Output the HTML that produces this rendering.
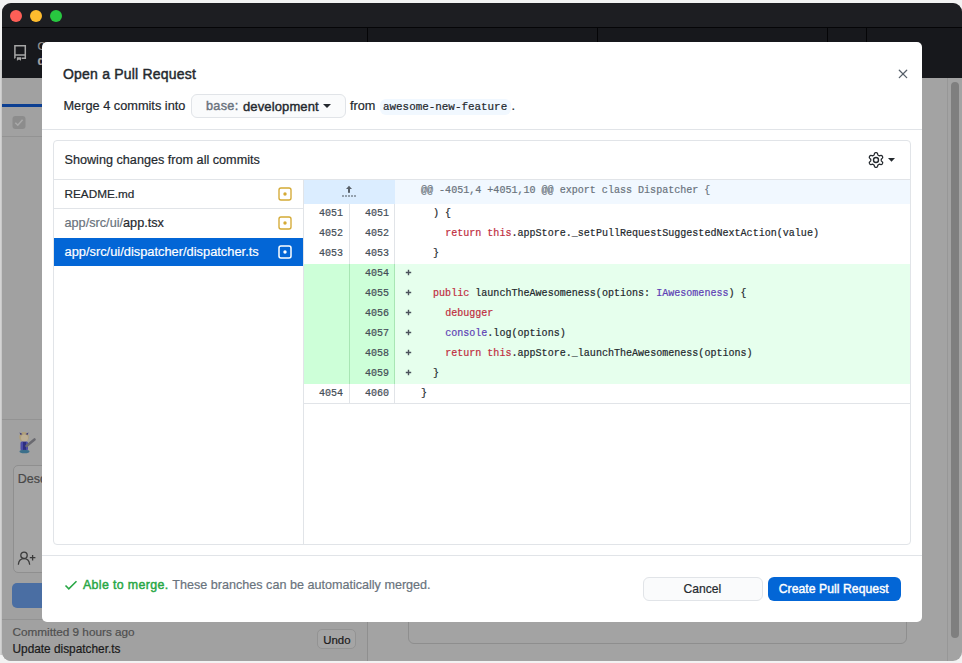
<!DOCTYPE html>
<html><head><meta charset="utf-8">
<style>
*{box-sizing:border-box;margin:0;padding:0}
html,body{width:962px;height:663px;overflow:hidden;background:#f2f2f2;font-family:"Liberation Sans",sans-serif;}
.a{position:absolute}
.t{position:absolute;white-space:nowrap;line-height:1;-webkit-text-stroke:0.2px currentColor}
.mono{font-family:"Liberation Mono",monospace;-webkit-text-stroke:0.2px}
.ln{font-size:10px;color:#444d56}
.cd{font-size:10.05px;color:#24292e}
.k{color:#c02d3e}
.p{color:#5e3fb5}
</style></head><body>
<!-- window -->
<div class="a" style="left:0;top:60px;width:2px;height:595px;background:linear-gradient(to right,#dadada,#c2c2c2)"></div>
<div class="a" style="left:2px;top:3px;width:960px;height:658px;border-radius:9px;overflow:hidden;background:#a3a3a3">
  <div class="a" style="left:0;top:0;width:960px;height:24px;background:#1d1e22"></div>
  <div class="a" style="left:0;top:24px;width:960px;height:1px;background:#050507"></div>
  <div class="a" style="left:0;top:25px;width:960px;height:50px;background:#17181c"></div>
  <div class="a" style="left:365px;top:25px;width:1px;height:50px;background:#050507"></div>
  <div class="a" style="left:595px;top:25px;width:1px;height:50px;background:#050507"></div>
  <div class="a" style="left:825px;top:25px;width:1px;height:50px;background:#050507"></div>
  <div class="a" style="left:864px;top:25px;width:1px;height:50px;background:#050507"></div>
  <!-- traffic -->
  <div class="a" style="left:8px;top:7px;width:12px;height:12px;border-radius:50%;background:#fe5f57"></div>
  <div class="a" style="left:28px;top:7px;width:12px;height:12px;border-radius:50%;background:#febc2e"></div>
  <div class="a" style="left:48px;top:7px;width:12px;height:12px;border-radius:50%;background:#28c840"></div>
  <!-- sidebar -->
  <div class="a" style="left:0;top:75px;width:365px;height:583px;background:#a1a1a1"></div>
  <div class="a" style="left:365px;top:75px;width:1px;height:583px;background:#8f8f8f"></div>
  <div class="a" style="left:0;top:101px;width:365px;height:3px;background:#0c3f92"></div>
  <div class="a" style="left:0;top:133px;width:365px;height:1px;background:#939393"></div>
  <div class="a" style="left:0;top:416px;width:365px;height:1px;background:#939393"></div>
  <div class="a" style="left:0;top:616px;width:365px;height:1px;background:#939393"></div>
  <div class="t" style="left:10.5px;top:622.5px;font-size:11.75px;color:#4f4f4f">Committed 9 hours ago</div>
  <div class="t" style="left:10.5px;top:641px;font-size:11.85px;color:#1a1a1a">Update dispatcher.ts</div>
  <div class="a" style="left:315px;top:626px;width:39px;height:20px;border:1px solid #939393;border-radius:5px;background:#a5a5a5"></div>
  <div class="t" style="left:321.3px;top:631.5px;font-size:11.4px;color:#1a1a1a">Undo</div>
  <!-- right panel -->
  <div class="a" style="left:406px;top:560px;width:499px;height:81px;border:1px solid #8e8e8e;border-radius:6px"></div>
  <div class="a" style="left:945px;top:75px;width:1px;height:583px;background:#979797"></div>
  <div class="a" style="left:949px;top:79px;width:8px;height:556px;border-radius:4px;background:#7f7f7f"></div>
</div>

<!-- bg extras (page coords) -->
<svg class="a" style="left:12px;top:42px" width="18" height="22" viewBox="0 0 18 22"><path d="M2.9 16V3.7H13.3V16.2H9.6M2.9 12.9H13.3" fill="none" stroke="#a6a6a6" stroke-width="1.5"/><path d="M2.5 15.7L2.9 16.6" stroke="#a6a6a6" stroke-width="1.2"/><path d="M4.9 15.3H9V18.8L7 17.6L4.9 18.8Z" fill="#a6a6a6"/></svg>
<div class="t" style="left:37.5px;top:40.5px;font-size:11px;color:#9a9a9a">Current</div>
<div class="t" style="left:37.5px;top:54.5px;font-size:12px;font-weight:bold;color:#a6a6a6">desktop</div>
<svg class="a" style="left:12px;top:116px" width="14" height="13" viewBox="0 0 14 13"><rect x="0.5" y="0" width="13" height="13" rx="3" fill="#8c8c8c"/><path d="M3.3 6.7L5.8 9.2L10.6 3.8" fill="none" stroke="#a9a9a9" stroke-width="1.6"/></svg>

<div class="a" style="left:13px;top:466px;width:40px;height:106px;background:#a5a5a5;border-radius:4px 0 0 4px"></div>
<div class="a" style="left:12.5px;top:465px;width:60px;height:107.5px;border:1px solid #8f8f8f;border-radius:5px"></div>
<div class="t" style="left:17.8px;top:472.5px;font-size:12.5px;color:#484848">Description</div>
<svg class="a" style="left:16px;top:549px" width="20" height="17" viewBox="0 0 20 17"><circle cx="8" cy="6.3" r="3.2" fill="none" stroke="#3a3a3a" stroke-width="1.3"/><path d="M2.4 15.2C2.8 11.6 5.2 9.6 8 9.6S13.2 11.6 13.6 15.2" fill="none" stroke="#3a3a3a" stroke-width="1.3" stroke-linecap="round"/><path d="M13.8 8.7H19.4M16.6 5.9V11.5" stroke="#3a3a3a" stroke-width="1.3"/></svg>
<svg class="a" style="left:17px;top:430px" width="20" height="25" viewBox="0 0 20 25">
<ellipse cx="7" cy="7" rx="4.8" ry="5" fill="#b0a07a"/>
<ellipse cx="7.5" cy="8" rx="3.5" ry="3.6" fill="#bcae94"/>
<path d="M2.5 2.5L3.5 5L5.5 4Z" fill="#3e3a78"/><path d="M11.5 2.5L10.5 5L8.5 4Z" fill="#3e3a78"/>
<rect x="3.5" y="11.5" width="7.5" height="9" rx="1.5" fill="#4c4ca8"/>
<rect x="6" y="12" width="3" height="8" fill="#2e2e80"/>
<path d="M9.5 16L17.5 9.5" stroke="#6a6a70" stroke-width="2.6" stroke-linecap="round"/>
<ellipse cx="7.5" cy="21.5" rx="5" ry="1.8" fill="#3b6f8a"/>
</svg>
<div class="a" style="left:12px;top:583px;width:60px;height:25px;border-radius:5px;background:#4a6ea3"></div>
<!-- modal -->
<div class="a" style="left:42px;top:42px;width:880px;height:580px;border-radius:5px;background:#fff"></div>
<div class="t" style="left:63px;top:67px;font-size:14px;letter-spacing:0.2px;-webkit-text-stroke:0.45px #24292e;color:#24292e">Open a Pull Request</div>
<svg class="a" style="left:897px;top:68px" width="12" height="12" viewBox="0 0 12 12"><path d="M2.3 2.2L9.7 9.6M9.7 2.2L2.3 9.6" stroke="#57606a" stroke-width="1.3" fill="none" stroke-linecap="round"/></svg>
<div class="t" style="left:63.5px;top:100.2px;font-size:12.75px;color:#24292e">Merge 4 commits into</div>
<div class="a" style="left:190.5px;top:94px;width:155px;height:24px;border:1px solid #e1e4e8;border-radius:6px;background:#fafbfc"></div>
<div class="t" style="left:206px;top:100px;font-size:12.7px;letter-spacing:0.3px;-webkit-text-stroke:0.4px #6a737d;color:#6a737d">base:</div>
<div class="t" style="left:243px;top:100px;font-size:13px;letter-spacing:0.12px;-webkit-text-stroke:0.4px #24292e;color:#24292e">development</div>
<svg class="a" style="left:323px;top:104px" width="8" height="4" viewBox="0 0 8 4"><path d="M0 0H8L4 4Z" fill="#24292e"/></svg>
<div class="t" style="left:350px;top:100.2px;font-size:12.7px;color:#24292e">from</div>
<div class="a" style="left:379.5px;top:98.5px;width:131px;height:16.5px;border-radius:6px;background:#f1f8ff"></div>
<div class="t mono" style="left:383px;top:102px;font-size:10.9px;color:#24292e">awesome-new-feature</div>
<div class="t" style="left:511.5px;top:100.2px;font-size:12.7px;color:#24292e">.</div>
<div class="a" style="left:42px;top:129px;width:880px;height:1px;background:#e1e4e8"></div>

<!-- box -->
<div class="a" style="left:53px;top:140px;width:858px;height:405px;border:1px solid #e1e4e8;border-radius:4px"></div>
<div class="t" style="left:64.5px;top:154px;font-size:12.65px;color:#24292e">Showing changes from all commits</div>
<svg class="a" style="left:868px;top:152px" width="16" height="16" viewBox="0 0 16 16"><circle cx="8" cy="8" r="2.5" fill="none" stroke="#24292e" stroke-width="1.4"/><path d="M13.25 8.00 L13.25 8.14 L13.26 8.28 L13.27 8.41 L13.29 8.56 L13.33 8.70 L13.39 8.85 L13.50 9.02 L13.65 9.20 L13.85 9.41 L14.09 9.63 L14.31 9.87 L14.49 10.11 L14.61 10.34 L14.66 10.56 L14.67 10.76 L14.65 10.96 L14.60 11.15 L14.54 11.33 L14.46 11.51 L14.37 11.67 L14.26 11.84 L14.15 12.00 L14.03 12.14 L13.89 12.28 L13.73 12.40 L13.55 12.49 L13.33 12.55 L13.07 12.56 L12.77 12.53 L12.45 12.45 L12.14 12.37 L11.87 12.29 L11.63 12.25 L11.44 12.24 L11.27 12.26 L11.13 12.30 L10.99 12.36 L10.87 12.42 L10.74 12.48 L10.62 12.55 L10.51 12.62 L10.39 12.69 L10.28 12.77 L10.16 12.86 L10.06 12.97 L9.96 13.10 L9.87 13.27 L9.79 13.50 L9.71 13.77 L9.63 14.09 L9.54 14.40 L9.42 14.67 L9.28 14.89 L9.12 15.05 L8.94 15.16 L8.76 15.24 L8.57 15.29 L8.38 15.33 L8.19 15.34 L8.00 15.35 L7.81 15.34 L7.62 15.33 L7.43 15.29 L7.24 15.24 L7.06 15.16 L6.88 15.05 L6.72 14.89 L6.58 14.67 L6.46 14.40 L6.37 14.09 L6.29 13.77 L6.21 13.50 L6.13 13.27 L6.04 13.10 L5.94 12.97 L5.84 12.86 L5.72 12.77 L5.61 12.69 L5.49 12.62 L5.38 12.55 L5.26 12.48 L5.13 12.42 L5.01 12.36 L4.87 12.30 L4.73 12.26 L4.56 12.24 L4.37 12.25 L4.13 12.29 L3.86 12.37 L3.55 12.45 L3.23 12.53 L2.93 12.56 L2.67 12.55 L2.45 12.49 L2.27 12.40 L2.11 12.28 L1.97 12.14 L1.85 12.00 L1.74 11.84 L1.63 11.67 L1.54 11.51 L1.46 11.33 L1.40 11.15 L1.35 10.96 L1.33 10.76 L1.34 10.56 L1.39 10.34 L1.51 10.11 L1.69 9.87 L1.91 9.63 L2.15 9.41 L2.35 9.20 L2.50 9.02 L2.61 8.85 L2.67 8.70 L2.71 8.56 L2.73 8.41 L2.74 8.28 L2.75 8.14 L2.75 8.00 L2.75 7.86 L2.74 7.72 L2.73 7.59 L2.71 7.44 L2.67 7.30 L2.61 7.15 L2.50 6.98 L2.35 6.80 L2.15 6.59 L1.91 6.37 L1.69 6.13 L1.51 5.89 L1.39 5.66 L1.34 5.44 L1.33 5.24 L1.35 5.04 L1.40 4.85 L1.46 4.67 L1.54 4.49 L1.63 4.33 L1.74 4.16 L1.85 4.00 L1.97 3.86 L2.11 3.72 L2.27 3.60 L2.45 3.51 L2.67 3.45 L2.93 3.44 L3.23 3.47 L3.55 3.55 L3.86 3.63 L4.13 3.71 L4.37 3.75 L4.56 3.76 L4.73 3.74 L4.87 3.70 L5.01 3.64 L5.13 3.58 L5.26 3.52 L5.37 3.45 L5.49 3.38 L5.61 3.31 L5.72 3.23 L5.84 3.14 L5.94 3.03 L6.04 2.90 L6.13 2.73 L6.21 2.50 L6.29 2.23 L6.37 1.91 L6.46 1.60 L6.58 1.33 L6.72 1.11 L6.88 0.95 L7.06 0.84 L7.24 0.76 L7.43 0.71 L7.62 0.67 L7.81 0.66 L8.00 0.65 L8.19 0.66 L8.38 0.67 L8.57 0.71 L8.76 0.76 L8.94 0.84 L9.12 0.95 L9.28 1.11 L9.42 1.33 L9.54 1.60 L9.63 1.91 L9.71 2.23 L9.79 2.50 L9.87 2.73 L9.96 2.90 L10.06 3.03 L10.16 3.14 L10.28 3.23 L10.39 3.31 L10.51 3.38 L10.62 3.45 L10.74 3.52 L10.87 3.58 L10.99 3.64 L11.13 3.70 L11.27 3.74 L11.44 3.76 L11.63 3.75 L11.87 3.71 L12.14 3.63 L12.45 3.55 L12.77 3.47 L13.07 3.44 L13.33 3.45 L13.55 3.51 L13.73 3.60 L13.89 3.72 L14.03 3.86 L14.15 4.00 L14.26 4.16 L14.37 4.33 L14.46 4.49 L14.54 4.67 L14.60 4.85 L14.65 5.04 L14.67 5.24 L14.66 5.44 L14.61 5.66 L14.49 5.89 L14.31 6.13 L14.09 6.37 L13.85 6.59 L13.65 6.80 L13.50 6.98 L13.39 7.15 L13.33 7.30 L13.29 7.44 L13.27 7.59 L13.26 7.72 L13.25 7.86Z" fill="none" stroke="#24292e" stroke-width="1.3"/></svg>
<svg class="a" style="left:888px;top:158px" width="7" height="4" viewBox="0 0 7 4"><path d="M0 0H7L3.5 3.8Z" fill="#24292e"/></svg>
<div class="a" style="left:54px;top:179px;width:856px;height:1px;background:#e1e4e8"></div>
<!-- file list -->
<div class="a" style="left:303px;top:180px;width:1px;height:364px;background:#e1e4e8"></div>
<div class="t" style="left:64.5px;top:188.3px;font-size:11.75px;color:#24292e">README.md</div>
<div class="a" style="left:54px;top:208px;width:249px;height:1px;background:#e1e4e8"></div>
<div class="t" style="left:64.5px;top:217px;font-size:12.7px;color:#6a737d">app/src/ui/<span style="color:#24292e">app.tsx</span></div>
<div class="a" style="left:54px;top:237.5px;width:249px;height:28px;background:#0366d6"></div>
<div class="t" style="left:64.5px;top:246px;font-size:12.85px;color:#fff">app/src/ui/dispatcher/dispatcher.ts</div>
<svg class="a" style="left:278px;top:187px" width="14" height="14" viewBox="0 0 14 14"><rect x="1" y="1" width="12" height="12" rx="2" fill="none" stroke="#d4aa35" stroke-width="1.35"/><circle cx="7" cy="7" r="1.7" fill="#d4aa35"/></svg>
<svg class="a" style="left:278px;top:215.8px" width="14" height="14" viewBox="0 0 14 14"><rect x="1" y="1" width="12" height="12" rx="2" fill="none" stroke="#d4aa35" stroke-width="1.35"/><circle cx="7" cy="7" r="1.7" fill="#d4aa35"/></svg>
<svg class="a" style="left:278px;top:245px" width="14" height="14" viewBox="0 0 14 14"><rect x="1" y="1" width="12" height="12" rx="2" fill="none" stroke="#fff" stroke-width="1.5"/><circle cx="7" cy="7" r="1.7" fill="#fff"/></svg>

<!-- footer -->
<div class="a" style="left:42px;top:555px;width:880px;height:1px;background:#e1e4e8"></div>
<svg class="a" style="left:64px;top:578.5px" width="14" height="12" viewBox="0 0 14 12"><path d="M1.5 6.5L4.8 9.8L12.5 2.2" fill="none" stroke="#28a745" stroke-width="1.6"/></svg>
<div class="t" style="left:83px;top:579.3px;font-size:12.4px;letter-spacing:0.35px;-webkit-text-stroke:0.45px #28a745;color:#28a745">Able to merge.</div>
<div class="t" style="left:172.3px;top:579.3px;font-size:12.6px;color:#6a737d">These branches can be automatically merged.</div>
<div class="a" style="left:643px;top:576.5px;width:119.5px;height:24px;border:1px solid #e1e4e8;border-radius:6px;background:#fafbfc"></div>
<div class="t" style="left:683.5px;top:582.5px;font-size:12.1px;color:#24292e">Cancel</div>
<div class="a" style="left:768px;top:576.5px;width:133px;height:24px;border-radius:6px;background:#0366d6"></div>
<div class="t" style="left:778.7px;top:583px;font-size:12.2px;letter-spacing:0.05px;-webkit-text-stroke:0.4px #fff;color:#fff">Create Pull Request</div>
<!-- diff -->
<div class="a" style="left:304px;top:180px;width:91px;height:24px;background:#dbedff"></div>
<div class="a" style="left:395px;top:180px;width:515px;height:24px;background:#f1f8ff"></div>
<svg class="a" style="left:341px;top:185px" width="16" height="13" viewBox="0 0 16 13"><path d="M5 4L8 0.8L11 4Z" fill="#586069"/><rect x="7" y="3.5" width="2" height="4.3" fill="#586069"/><g fill="#6e7781"><rect x="1.2" y="10.2" width="1.6" height="1.6"/><rect x="4.2" y="10.2" width="1.6" height="1.6"/><rect x="7.2" y="10.2" width="1.6" height="1.6"/><rect x="10.2" y="10.2" width="1.6" height="1.6"/><rect x="13.2" y="10.2" width="1.6" height="1.6"/></g></svg>
<div class="t mono" style="left:421px;top:186px;font-size:10.05px;color:#6a737d">@@ -4051,4 +4051,10 @@ export class Dispatcher {</div>
<div class="a" style="left:349px;top:204px;width:1px;height:20px;background:#e1e4e8"></div>
<div class="a" style="left:394px;top:204px;width:1px;height:20px;background:#e1e4e8"></div>
<div class="t mono ln" style="left:319px;top:209px">4051</div>
<div class="t mono ln" style="left:365px;top:209px">4051</div>
<div class="t mono cd" style="left:421px;top:209px">&#160;&#160;)&#160;{</div>
<div class="a" style="left:349px;top:224px;width:1px;height:20px;background:#e1e4e8"></div>
<div class="a" style="left:394px;top:224px;width:1px;height:20px;background:#e1e4e8"></div>
<div class="t mono ln" style="left:319px;top:229px">4052</div>
<div class="t mono ln" style="left:365px;top:229px">4052</div>
<div class="t mono cd" style="left:421px;top:229px">&#160;&#160;&#160;&#160;<span class="k">return</span>&#160;<span class="k">this</span>.appStore._setPullRequestSuggestedNextAction(value)</div>
<div class="a" style="left:349px;top:244px;width:1px;height:20px;background:#e1e4e8"></div>
<div class="a" style="left:394px;top:244px;width:1px;height:20px;background:#e1e4e8"></div>
<div class="t mono ln" style="left:319px;top:249px">4053</div>
<div class="t mono ln" style="left:365px;top:249px">4053</div>
<div class="t mono cd" style="left:421px;top:249px">&#160;&#160;}</div>
<div class="a" style="left:304px;top:264px;width:91px;height:20px;background:#cdffd8"></div>
<div class="a" style="left:395px;top:264px;width:515px;height:20px;background:#e6ffed"></div>
<div class="a" style="left:349px;top:264px;width:1px;height:20px;background:#a8e6b4"></div>
<div class="a" style="left:394px;top:264px;width:1px;height:20px;background:#a8e6b4"></div>
<div class="t mono ln" style="left:365px;top:269px">4054</div>
<svg class="a" style="left:405px;top:268.5px" width="7" height="7" viewBox="0 0 7 7"><path d="M0.8 3.5H6.2M3.5 0.8V6.2" stroke="#4a525b" stroke-width="1.4"/></svg>
<div class="a" style="left:304px;top:284px;width:91px;height:20px;background:#cdffd8"></div>
<div class="a" style="left:395px;top:284px;width:515px;height:20px;background:#e6ffed"></div>
<div class="a" style="left:349px;top:284px;width:1px;height:20px;background:#a8e6b4"></div>
<div class="a" style="left:394px;top:284px;width:1px;height:20px;background:#a8e6b4"></div>
<div class="t mono ln" style="left:365px;top:289px">4055</div>
<svg class="a" style="left:405px;top:288.5px" width="7" height="7" viewBox="0 0 7 7"><path d="M0.8 3.5H6.2M3.5 0.8V6.2" stroke="#4a525b" stroke-width="1.4"/></svg>
<div class="t mono cd" style="left:421px;top:289px">&#160;&#160;<span class="k">public</span>&#160;launchTheAwesomeness(options:&#160;<span class="p">IAwesomeness</span>)&#160;{</div>
<div class="a" style="left:304px;top:304px;width:91px;height:20px;background:#cdffd8"></div>
<div class="a" style="left:395px;top:304px;width:515px;height:20px;background:#e6ffed"></div>
<div class="a" style="left:349px;top:304px;width:1px;height:20px;background:#a8e6b4"></div>
<div class="a" style="left:394px;top:304px;width:1px;height:20px;background:#a8e6b4"></div>
<div class="t mono ln" style="left:365px;top:309px">4056</div>
<svg class="a" style="left:405px;top:308.5px" width="7" height="7" viewBox="0 0 7 7"><path d="M0.8 3.5H6.2M3.5 0.8V6.2" stroke="#4a525b" stroke-width="1.4"/></svg>
<div class="t mono cd" style="left:421px;top:309px">&#160;&#160;&#160;&#160;<span class="k">debugger</span></div>
<div class="a" style="left:304px;top:324px;width:91px;height:20px;background:#cdffd8"></div>
<div class="a" style="left:395px;top:324px;width:515px;height:20px;background:#e6ffed"></div>
<div class="a" style="left:349px;top:324px;width:1px;height:20px;background:#a8e6b4"></div>
<div class="a" style="left:394px;top:324px;width:1px;height:20px;background:#a8e6b4"></div>
<div class="t mono ln" style="left:365px;top:329px">4057</div>
<svg class="a" style="left:405px;top:328.5px" width="7" height="7" viewBox="0 0 7 7"><path d="M0.8 3.5H6.2M3.5 0.8V6.2" stroke="#4a525b" stroke-width="1.4"/></svg>
<div class="t mono cd" style="left:421px;top:329px">&#160;&#160;&#160;&#160;<span class="p">console</span>.log(options)</div>
<div class="a" style="left:304px;top:344px;width:91px;height:20px;background:#cdffd8"></div>
<div class="a" style="left:395px;top:344px;width:515px;height:20px;background:#e6ffed"></div>
<div class="a" style="left:349px;top:344px;width:1px;height:20px;background:#a8e6b4"></div>
<div class="a" style="left:394px;top:344px;width:1px;height:20px;background:#a8e6b4"></div>
<div class="t mono ln" style="left:365px;top:349px">4058</div>
<svg class="a" style="left:405px;top:348.5px" width="7" height="7" viewBox="0 0 7 7"><path d="M0.8 3.5H6.2M3.5 0.8V6.2" stroke="#4a525b" stroke-width="1.4"/></svg>
<div class="t mono cd" style="left:421px;top:349px">&#160;&#160;&#160;&#160;<span class="k">return</span>&#160;<span class="k">this</span>.appStore._launchTheAwesomeness(options)</div>
<div class="a" style="left:304px;top:364px;width:91px;height:20px;background:#cdffd8"></div>
<div class="a" style="left:395px;top:364px;width:515px;height:20px;background:#e6ffed"></div>
<div class="a" style="left:349px;top:364px;width:1px;height:20px;background:#a8e6b4"></div>
<div class="a" style="left:394px;top:364px;width:1px;height:20px;background:#a8e6b4"></div>
<div class="t mono ln" style="left:365px;top:369px">4059</div>
<svg class="a" style="left:405px;top:368.5px" width="7" height="7" viewBox="0 0 7 7"><path d="M0.8 3.5H6.2M3.5 0.8V6.2" stroke="#4a525b" stroke-width="1.4"/></svg>
<div class="t mono cd" style="left:421px;top:369px">&#160;&#160;}</div>
<div class="a" style="left:349px;top:384px;width:1px;height:20px;background:#e1e4e8"></div>
<div class="a" style="left:394px;top:384px;width:1px;height:20px;background:#e1e4e8"></div>
<div class="t mono ln" style="left:319px;top:389px">4054</div>
<div class="t mono ln" style="left:365px;top:389px">4060</div>
<div class="t mono cd" style="left:421px;top:389px">}</div>
<div class="a" style="left:304px;top:403px;width:606px;height:1px;background:#e1e4e8"></div>
</body></html>
